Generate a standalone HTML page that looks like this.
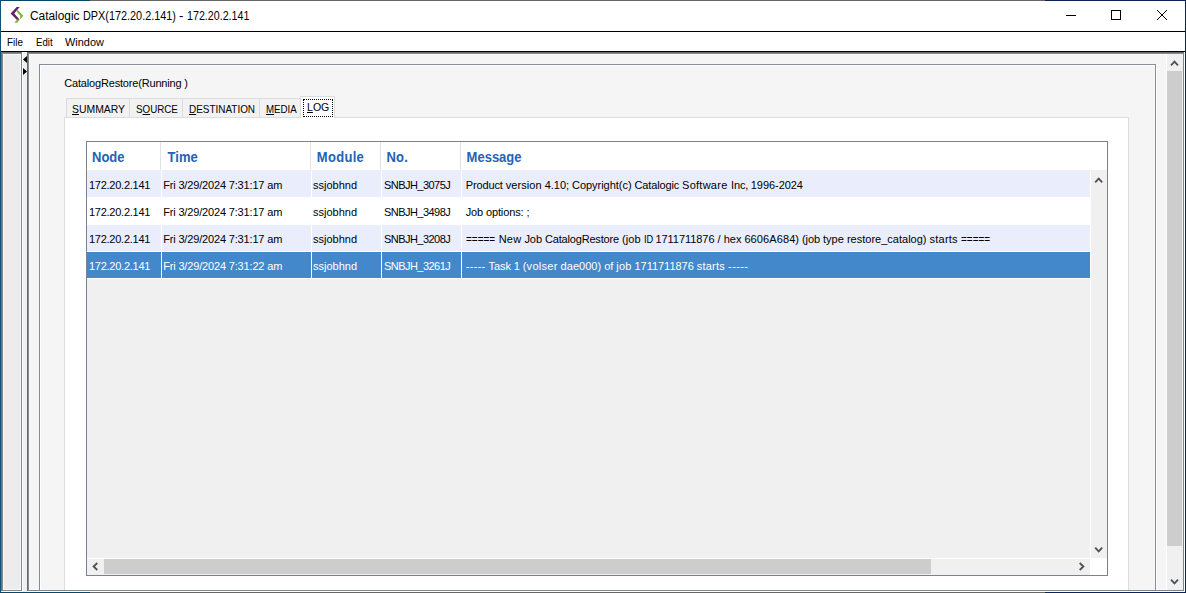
<!DOCTYPE html>
<html><head><meta charset="utf-8">
<style>
*{box-sizing:border-box;margin:0;padding:0}
html,body{width:1186px;height:593px;overflow:hidden;background:#fff}
body{position:relative;font-family:"Liberation Sans",sans-serif;font-size:11px;color:#000}
.abs{position:absolute}
#frame{left:0;top:0;width:1186px;height:593px;background:#fff;border-left:1px solid #0e5274;border-right:1px solid #0a2458}
.hb{left:0;width:1186px;height:1px;background:linear-gradient(90deg,#0a4668 0,#0a4668 90px,#666 90px,#666 1045px,#0a2458 1045px)}
.tt{top:7px;height:18px;line-height:18px;font-size:12px;white-space:pre;transform-origin:0 0}
#tline{left:1px;top:31px;width:1184px;height:1px;background:#000}
#mline{left:1px;top:51px;width:1184px;height:1px;background:#000}
.menu{top:33.3px;height:18px;line-height:18px;font-size:11.5px;white-space:nowrap;transform-origin:0 0}

#client{left:1px;top:52px;width:1183px;height:539px;background:#f5f5f5;overflow:hidden}
.g{background:#7d8390}
#lp{left:1px;top:52px;width:21px;height:539px;background:#ececec;box-shadow:inset 1px 1px 0 #707070,inset 2px 2px 0 #858a95,inset -1px -1px 0 #80858f,inset 3px 3px 0 #f9f9f9,inset -2px -2px 0 #f9f9f9}
#split{left:22px;top:52px;width:5px;height:540px;background:#f0f0f0;border-left:1px solid #fff}
#main{left:27px;top:52px;width:1157px;height:539px;background:#f5f5f5;box-shadow:inset 1px 1px 0 #6a6a6a,inset 2px 2px 0 #858a95,inset -1px -1px 0 #80858f,inset 3px 3px 0 #fafafa,inset -2px -2px 0 #fafafa}
#inner{left:39px;top:64px;width:1117px;height:540px;border:1px solid #868c98;box-shadow:inset 1px 1px 0 #fff, 1px 0 0 #fff;background:#f5f5f5}
#vsb{left:1166px;top:54px;width:17px;height:536px;background:#f0f0f0;border-left:1px solid #fff}
#vthumb{left:1167px;top:71px;width:15px;height:475px;background:#cdcdcd}
#jobtitle{left:64.3px;top:76px;line-height:14px;white-space:nowrap;font-size:11px;letter-spacing:-0.18px}
.tab{top:98px;height:19px;border:1px solid #dcdcdc;border-bottom:none;background:#f2f2f2;font-size:11px;line-height:14px;padding-top:3px;white-space:nowrap;text-align:left;overflow:hidden}
.tab span,#logtxt span{display:inline-block;transform-origin:0 50%}
.tab u{text-decoration:underline;text-underline-offset:1px}
#tabsel{left:300px;top:96px;width:35px;height:22px;background:#fff;border:1px solid #dcdcdc;border-bottom:none}
#focus{left:303px;top:99px;width:30px;height:18px;border:1px dotted #000}
#panel{left:64px;top:117px;width:1065px;height:480px;background:#fff;border:1px solid #dcdcdc}
#tbl{left:86px;top:141px;width:1022px;height:435px;border:1px solid #7b8190;background:#fff;overflow:hidden}
#tbody{left:87px;top:171px;width:1003px;height:387px;background:#f0f0f0}
.th{top:142px;height:28px;line-height:30px;font-weight:bold;font-size:13px;color:#2462b4;white-space:nowrap;padding-left:5px;transform:scaleY(1.08);transform-origin:0 10px}
.hd{top:142px;width:1px;height:28px;background:#e2e2e2}
.row{left:87px;width:1003px;height:26px;line-height:28px;box-shadow:0 1px 0 #fff}
.row span{position:absolute;top:0;white-space:pre;height:26px;font-size:11px}
.r1{background:#eaedfb}.r2{background:#fff}.sel{background:#4388cb;color:#fff}
.cd{top:171px;width:1px;height:108px;background:#fff}
#tvsb{left:1090px;top:171px;width:17px;height:387px;background:#f0f0f0;border-left:1px solid #fff}
#thsb{left:87px;top:558px;width:1003px;height:17px;background:#f0f0f0;border-top:1px solid #fff}
#hthumb{left:104px;top:559px;width:827px;height:15px;background:#cdcdcd}
</style></head><body>
<div id="frame" class="abs"></div><div class="hb abs" style="top:0"></div><div class="hb abs" style="top:592px"></div>
<svg class="abs" style="left:10px;top:6px" width="15" height="18" viewBox="0 0 15 18">
<polygon points="6.7,1.1 9.7,1.1 4.3,7.4 9.7,13.7 6.7,13.7 0.6,7.4" fill="#6a1f6e"/>
<polygon points="7.7,3.9 13.3,9.7 7.2,16.8 4.2,16.8 6.9,13.9 9.9,13.9 10.3,9.7 6.6,5.4" fill="#7db52c"/>
</svg>
<div class="tt abs" style="left:30px;transform:scaleX(0.99)">Catalogic </div><div class="tt abs" style="left:82.8px;transform:scaleX(0.905)">DPX(172.20.2.141) </div><div class="tt abs" style="left:179.4px;transform:scaleX(1.1)">- </div><div class="tt abs" style="left:186.5px;transform:scaleX(0.89)">172.20.2.141</div>
<svg class="abs" style="left:1060px;top:5px" width="120" height="22" viewBox="0 0 120 22" fill="none" stroke="#000" stroke-width="1">
<path d="M6 10.5H16"/><rect x="51.5" y="5.5" width="9" height="9"/><path d="M97 5L107 15M107 5L97 15"/>
</svg>
<div id="tline" class="abs"></div>
<div class="menu abs" style="left:7px;transform:scaleX(0.856)">File</div>
<div class="menu abs" style="left:36px;transform:scaleX(0.835)">Edit</div>
<div class="menu abs" style="left:65.3px;transform:scaleX(0.95)">Window</div>
<div id="mline" class="abs"></div>
<div id="client" class="abs"></div>

<div id="lp" class="abs"></div>
<div id="split" class="abs"></div>
<svg class="abs" style="left:22px;top:55px" width="6" height="22" viewBox="0 0 6 22"><polygon points="5,1 5,8 1,4.5" fill="#000"/><polygon points="1,13 1,20 5,16.5" fill="#000"/></svg>
<div id="main" class="abs"></div>
<div id="clip" class="abs" style="left:30px;top:54px;width:1136px;height:536px;overflow:hidden">
<div class="abs" style="left:-30px;top:-54px;width:1186px;height:593px">
<div id="inner" class="abs"></div>
<div id="jobtitle" class="abs">CatalogRestore(Running )</div>
<div id="panel" class="abs"></div>
<div class="tab abs" style="left:66px;width:64px;padding-left:5.2px"><span style="transform:scaleX(0.946)"><u>S</u>UMMARY</span></div>
<div class="tab abs" style="left:129px;width:54px;padding-left:6.3px"><span style="transform:scaleX(0.89)">S<u>O</u>URCE</span></div>
<div class="tab abs" style="left:182px;width:78px;padding-left:6px"><span style="transform:scaleX(0.903)"><u>D</u>ESTINATION</span></div>
<div class="tab abs" style="left:259px;width:42px;padding-left:6.2px"><span style="transform:scaleX(0.884)"><u>M</u>EDIA</span></div>
<div id="tabsel" class="abs"></div>
<div id="focus" class="abs"></div>
<div id="logtxt" class="abs" style="left:307px;top:100px;line-height:14px;font-size:11px;white-space:nowrap"><span style="transform:scaleX(0.96)"><u style="text-underline-offset:1px">L</u>OG</span></div>
<div id="tbl" class="abs"></div>
<div id="tbody" class="abs"></div>
<div class="th abs" style="left:87px;width:74px">Node</div>
<div class="th abs" style="left:161px;width:150px;padding-left:6.4px;letter-spacing:0.1px">Time</div>
<div class="th abs" style="left:311px;width:70px;padding-left:5.8px;letter-spacing:0.3px">Module</div>
<div class="th abs" style="left:381px;width:80px;padding-left:5.4px;letter-spacing:0.3px">No.</div>
<div class="th abs" style="left:461px;width:646px;border-right:none;padding-left:5.6px">Message</div>
<div class="hd abs" style="left:160px"></div><div class="hd abs" style="left:310px"></div><div class="hd abs" style="left:380px"></div><div class="hd abs" style="left:460px"></div>
<div class="row r1 abs" style="top:171px"><span style="left:2px;letter-spacing:-0.26px">172.20.2.141 </span><span style="left:76.2px;letter-spacing:-0.165px">Fri 3/29/2024 7:31:17 am </span><span style="left:226px">ssjobhnd </span><span style="left:297px;letter-spacing:-0.54px">SNBJH_3075J </span><span style="left:378.8px;letter-spacing:-0.13px">Product </span><span style="left:418.8px;letter-spacing:0.06px">version </span><span style="left:457.7px;letter-spacing:-0.03px">4.10; </span><span style="left:485.0px;letter-spacing:-0.03px">Copyright(c) </span><span style="left:547.5px;letter-spacing:-0.14px">Catalogic </span><span style="left:595.1px;letter-spacing:0.25px">Software </span><span style="left:644.0px;letter-spacing:-0.10px">Inc, </span><span style="left:663.8px;letter-spacing:-0.06px">1996-2024</span></div>
<div class="row r2 abs" style="top:198px"><span style="left:2px;letter-spacing:-0.26px">172.20.2.141 </span><span style="left:76.2px;letter-spacing:-0.165px">Fri 3/29/2024 7:31:17 am </span><span style="left:226px">ssjobhnd </span><span style="left:297px;letter-spacing:-0.54px">SNBJH_3498J </span><span style="left:378.8px;letter-spacing:-0.18px">Job </span><span style="left:399.0px;letter-spacing:-0.14px">options: </span><span style="left:439.4px;letter-spacing:0.45px">;</span></div>
<div class="row r1 abs" style="top:225px"><span style="left:2px;letter-spacing:-0.26px">172.20.2.141 </span><span style="left:76.2px;letter-spacing:-0.165px">Fri 3/29/2024 7:31:17 am </span><span style="left:226px">ssjobhnd </span><span style="left:297px;letter-spacing:-0.54px">SNBJH_3208J </span><span style="left:378.8px;transform:scaleX(0.905);transform-origin:0 0">===== </span><span style="left:411.7px;letter-spacing:0.23px">New </span><span style="left:437.4px;letter-spacing:-0.05px">Job </span><span style="left:458.0px;letter-spacing:-0.18px">CatalogRestore </span><span style="left:534.9px;letter-spacing:0.09px">(job </span><span style="left:556.6px;transform:scaleX(0.84);transform-origin:0 0">ID </span><span style="left:568.5px;letter-spacing:-0.06px">1711711876 </span><span style="left:630.4px;letter-spacing:0.34px">/ </span><span style="left:636.8px;letter-spacing:-0.05px">hex </span><span style="left:657.4px;letter-spacing:0.10px">6606A684) </span><span style="left:715.1px;letter-spacing:-0.14px">(job </span><span style="left:735.9px;letter-spacing:0.05px">type </span><span style="left:759.9px;letter-spacing:0.01px">restore_catalog) </span><span style="left:842.6px;letter-spacing:0.22px">starts </span><span style="left:873.8px;transform:scaleX(0.905);transform-origin:0 0">=====</span></div>
<div class="row sel abs" style="top:252px"><span style="left:2px;letter-spacing:-0.26px">172.20.2.141 </span><span style="left:76.2px;letter-spacing:-0.165px">Fri 3/29/2024 7:31:22 am </span><span style="left:226px">ssjobhnd </span><span style="left:297px;letter-spacing:-0.54px">SNBJH_3261J </span><span style="left:378.8px;letter-spacing:0.29px">----- </span><span style="left:401.6px;letter-spacing:-0.11px">Task </span><span style="left:426.8px;letter-spacing:-0.23px">1 </span><span style="left:435.7px;letter-spacing:0.27px">(volser </span><span style="left:473.6px;letter-spacing:0.03px">dae000) </span><span style="left:517.2px;letter-spacing:-0.04px">of </span><span style="left:529.3px;letter-spacing:0.17px">job </span><span style="left:547.5px;letter-spacing:-0.03px">1711711876 </span><span style="left:609.7px;letter-spacing:0.25px">starts </span><span style="left:641.1px;letter-spacing:0.39px">-----</span></div>
<div class="cd abs" style="left:161px"></div><div class="cd abs" style="left:311px"></div><div class="cd abs" style="left:381px"></div><div class="cd abs" style="left:461px"></div><div class="abs" style="left:88px;top:170px;width:1019px;height:1px;background:#f0f0f0"></div>
<div id="tvsb" class="abs"></div>
<div id="thsb" class="abs"></div>
<div id="hthumb" class="abs"></div>
<svg class="abs" style="left:1091px;top:171px" width="16" height="387" viewBox="0 0 16 387" fill="none" stroke="#505050" stroke-width="1.8"><path d="M4.2 11.3L7.7 7.6L11.2 11.3"/><path d="M4.2 376.7L7.7 380.4L11.2 376.7"/></svg>
<svg class="abs" style="left:87px;top:559px" width="1003" height="16" viewBox="0 0 1003 16" fill="none" stroke="#505050" stroke-width="1.8"><path d="M10.3 4L6.6 7.5L10.3 11"/><path d="M992.7 4L996.4 7.5L992.7 11"/></svg>
</div></div>
<div id="vsb" class="abs"></div>
<div id="vthumb" class="abs"></div>
<svg class="abs" style="left:1167px;top:53px" width="16" height="537" viewBox="0 0 16 537" fill="none" stroke="#505050" stroke-width="1.8"><path d="M4 12.3L7.5 8.6L11 12.3"/><path d="M4 526.7L7.5 530.4L11 526.7"/></svg>
</body></html>
